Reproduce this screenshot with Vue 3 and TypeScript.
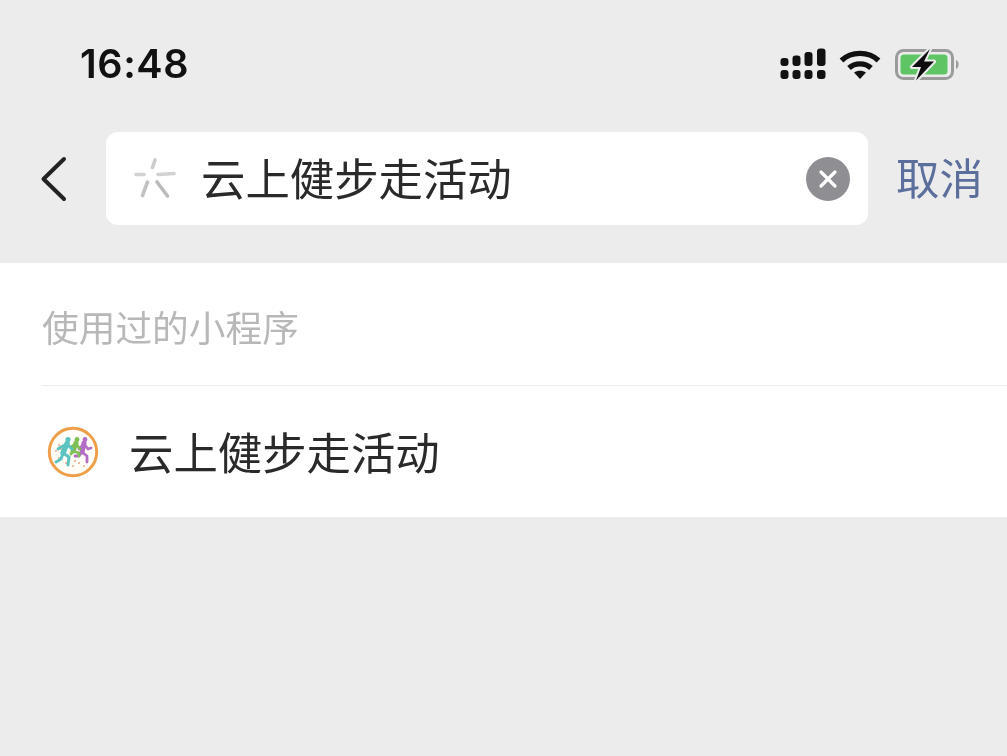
<script setup lang="ts">
const title: string = '云上健步走活动'
</script>

<template>
  <div class="page">
    <header class="status">
      <span class="time">16:48</span>
      <div class="status-icons">
        <svg width="46" height="32" viewBox="0 0 46 32">
          <g fill="#111">
            <rect x="0.5" y="10" width="8" height="8" rx="3" />
            <rect x="0.5" y="22" width="8" height="9" rx="3" />
            <rect x="12.5" y="7.5" width="8" height="10.5" rx="3" />
            <rect x="12.5" y="22" width="8" height="9" rx="3" />
            <rect x="24.5" y="4" width="8" height="14" rx="3" />
            <rect x="24.5" y="22" width="8" height="9" rx="3" />
            <rect x="37" y="0.5" width="8.5" height="17.5" rx="3" />
            <rect x="37" y="22" width="8.5" height="9" rx="3" />
          </g>
        </svg>
        <svg class="wifi" width="42" height="32" viewBox="0 0 42 32">
          <g fill="none" stroke="#111" stroke-width="5.4">
            <path d="M2.5 12.5C12.5 3 29.5 3 39.5 12.5" />
            <path d="M10 20C16 14.5 26 14.5 32 20" />
          </g>
          <path d="M15 24.5C18.5 22 23.5 22 27 24.5L21 31Z" fill="#111" />
        </svg>
        <svg class="battery" width="66" height="34" viewBox="0 0 66 34">
          <rect x="1.5" y="3.5" width="56" height="28" rx="7" fill="none" stroke="#9b9b9b" stroke-width="3" />
          <rect x="5.5" y="7.5" width="47" height="20" rx="3.5" fill="#5fc564" />
          <path d="M61 13C64.5 14 64.5 21 61 22Z" fill="#9b9b9b" />
          <path d="M35 2L17 20H26L21 33.5L39 14.5H29Z" fill="#0d0d0d" stroke="#ececec" stroke-width="4" paint-order="stroke" stroke-linejoin="round" />
        </svg>
      </div>
    </header>

    <nav class="search-bar">
      <svg class="back" width="28" height="46" viewBox="0 0 28 46">
        <path d="M24 3L3.5 23L24 43" fill="none" stroke="#222" stroke-width="4" stroke-linecap="round" stroke-linejoin="round" />
      </svg>
      <div class="field">
        <svg class="wx" width="44" height="44" viewBox="0 0 44 44">
          <g fill="none" stroke-width="3.6" stroke-linecap="round">
            <path d="M4 17.5H12" stroke="#d2d2d2" />
            <path d="M23 3L20.5 10.5" stroke="#cbcbcb" />
            <path d="M26 17.5L42 16.5" stroke="#d2d2d2" />
            <path d="M15.5 25L10.5 38.5" stroke="#c2c2c2" />
            <path d="M25 25L35.5 39" stroke="#bbbbbb" />
          </g>
        </svg>
        <span class="query">{{ title }}</span>
        <span class="clear">
          <svg width="22" height="22" viewBox="0 0 22 22">
            <path d="M4 4L18 18M18 4L4 18" stroke="#fff" stroke-width="3.2" stroke-linecap="round" />
          </svg>
        </span>
      </div>
      <span class="cancel">取消</span>
    </nav>

    <section class="results">
      <div class="section-title">使用过的小程序</div>
      <div class="result-row">
        <svg class="logo" width="54" height="54" viewBox="0 0 54 54">
          <circle cx="27" cy="27" r="23.7" fill="#fffdf8" stroke="#ef9f4a" stroke-width="3" />
          <g fill="#eaa98a">
            <circle cx="13" cy="20" r="1" /><circle cx="10" cy="26" r="1" /><circle cx="15" cy="24" r="1" />
            <circle cx="20" cy="38" r="1" /><circle cx="27" cy="41" r="1" /><circle cx="33" cy="38" r="1" />
            <circle cx="38" cy="41" r="1" /><circle cx="13" cy="33" r="1" /><circle cx="29" cy="36" r="1" />
          </g>
          <g fill="none" stroke-linecap="round" stroke-linejoin="round">
            <g stroke="#b56cc6" stroke-width="2.8">
              <path d="M38 18L36 27" stroke-width="5" />
              <path d="M38 19L42 24L45 23M38 19L33 24M36 27L41 31L41 37M36 27L33 31L29 31" />
            </g>
            <g stroke="#7fbf55" stroke-width="2.8">
              <path d="M30 18L27 26" stroke-width="5" />
              <path d="M30 19L34 24M30 19L25 22M27 26L33 28L33 31M27 26L25 29" />
            </g>
            <g stroke="#5cc4c0" stroke-width="3">
              <path d="M21 18.5L17 28" stroke-width="5.4" />
              <path d="M21 19L26 24M21 19L15 22L12 24M17 28L23 32L22 40M17 28L15 34L10 37" />
            </g>
          </g>
          <circle cx="39" cy="14.5" r="2.4" fill="#b56cc6" />
          <circle cx="31" cy="14.5" r="2.4" fill="#7fbf55" />
          <circle cx="22" cy="14.5" r="2.6" fill="#5cc4c0" />
        </svg>
        <span class="row-title">{{ title }}</span>
      </div>
    </section>
  </div>
</template>

<style scoped>
.page {
  width: 1007px;
  height: 756px;
  overflow: hidden;
  background: #ececec;
  font-family: "Noto Sans CJK SC", "Liberation Sans", sans-serif;
  filter: blur(0.45px);
}
.status {
  height: 132px;
  box-sizing: border-box;
  padding: 40px 46px 0 80px;
  display: flex;
  justify-content: space-between;
  align-items: flex-start;
}
.time {
  font-family: Inter, "Liberation Sans", sans-serif;
  font-size: 39.5px;
  font-weight: 600;
  line-height: 48px;
  color: #111;
  letter-spacing: 0.6px;
}
.status-icons {
  display: flex;
  align-items: center;
  gap: 13px;
  padding-top: 7px;
}
.battery { margin-left: 1px; }
.search-bar {
  height: 131px;
  box-sizing: border-box;
  display: flex;
  align-items: flex-start;
  padding-left: 40px;
}
.back {
  flex: none;
  margin-top: 24px;
  margin-right: 38px;
}
.field {
  width: 762px;
  height: 93px;
  box-sizing: border-box;
  flex: none;
  background: #fff;
  border-radius: 12px;
  display: flex;
  align-items: center;
  padding: 0 18px 0 26px;
}
.wx { flex: none; margin-right: 25px; }
.query {
  flex: 1;
  font-size: 44.4px;
  line-height: 60px;
  padding-bottom: 3px;
  color: #2a2a2a;
}
.clear {
  flex: none;
  width: 44px;
  height: 44px;
  border-radius: 50%;
  background: #8e8e93;
  display: flex;
  align-items: center;
  justify-content: center;
}
.cancel {
  margin-left: 28px;
  font-size: 43.5px;
  line-height: 89px;
  color: #5c6f9c;
  white-space: nowrap;
}
.results {
  background: #fff;
  height: 254px;
  padding-left: 42px;
  box-sizing: border-box;
}
.section-title {
  height: 123px;
  box-sizing: border-box;
  border-bottom: 1.5px solid #ececec;
  font-size: 36.7px;
  line-height: 50px;
  padding-top: 38px;
  color: #b8b8b8;
}
.result-row {
  height: 131px;
  display: flex;
  align-items: center;
}
.logo { flex: none; margin-left: 4px; margin-right: 29px; }
.row-title {
  font-size: 44.4px;
  line-height: 60px;
  padding-bottom: 2px;
  color: #2a2a2a;
}
</style>
